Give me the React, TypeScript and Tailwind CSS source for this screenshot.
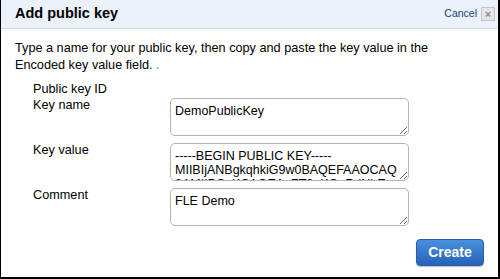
import React from 'react';

const fields = [
  { label: 'Key name', value: 'DemoPublicKey' },
  {
    label: 'Key value',
    value:
      '-----BEGIN PUBLIC KEY-----\nMIIBIjANBgkqhkiG9w0BAQEFAAOCAQ\n8AMIIBCgKCAQEAuZT9uKGuRdNbE\nqkQXH5bYc1m0vKpZ2w',
  },
  { label: 'Comment', value: 'FLE Demo' },
];

const App = () => {
  return (
    <div className="w-[500px] h-[279px] bg-white border-l border-r-2 border-b-2 border-black font-['Liberation_Sans',Arial,sans-serif] text-[#222] overflow-hidden">
      <div className="h-[29px] bg-[#ebf2fb] border-b border-[#c8dbf0] flex items-center pl-[14px] pr-[3px]">
        <h1 className="text-[14.5px] font-bold text-black flex-1">Add public key</h1>
        <a className="text-[10.5px] text-[#23407a] mr-[4px]">Cancel</a>
        <span className="w-[14px] h-[14px] bg-[#e6e6e6] border border-[#c4c4c4] flex items-center justify-center text-[#8a8a8a] text-[11px] leading-none font-bold">×</span>
      </div>

      <p className="text-[12.7px] leading-[17px] text-black px-[14px] pt-[11px] pr-[40px]">
        Type a name for your public key, then copy and paste the key value in the Encoded key value field. <span className="text-[#3b73c5]">.</span>
      </p>

      <div className="pl-[32px] pt-[7px]">
        <div className="text-[12.7px] leading-[17px] text-black">Public key ID</div>
        <div className="flex flex-col gap-[7px]">
          {fields.map(f => (
            <div key={f.label} className="flex">
              <div className="w-[137px] text-[12.7px] leading-[15px] text-black">{f.label}</div>
              <textarea
                readOnly
                value={f.value}
                className="w-[239px] h-[38px] border border-[#b4b4b4] rounded-[5px] px-[4px] pt-[5px] text-[12.5px] leading-[14px] text-black resize-y overflow-hidden whitespace-pre font-['Liberation_Sans',Arial,sans-serif] bg-white"
              />
            </div>
          ))}
        </div>
      </div>

      <div className="flex justify-end pr-[14px] pt-[13px]">
        <button className="w-[68px] h-[27px] rounded-[4px] bg-gradient-to-b from-[#4a90dd] to-[#2463b8] border border-[#2a5ea8] text-white text-[14px] font-bold shadow-[0_1px_1px_rgba(0,0,0,0.25)]">
          Create
        </button>
      </div>
    </div>
  );
};

export default App;
